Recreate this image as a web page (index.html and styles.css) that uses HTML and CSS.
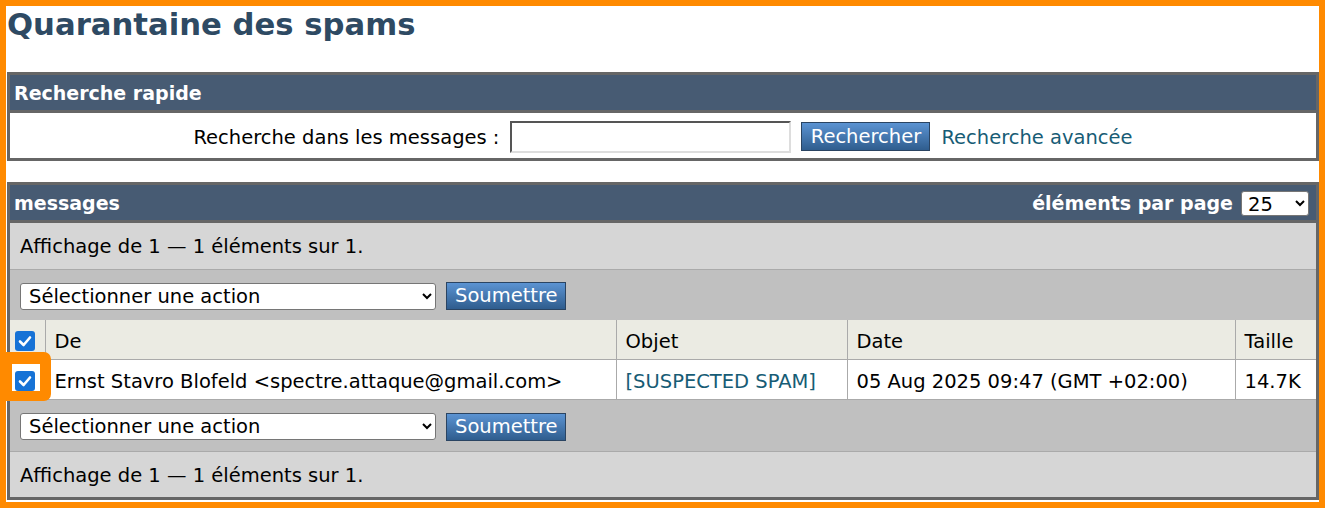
FILE: index.html
```html
<!DOCTYPE html>
<html lang="fr">
<head>
<meta charset="utf-8">
<title>Quarantaine des spams</title>
<link rel="stylesheet" href="styles.css">
</head>
<body>
<div class="page">
  <h1 class="title">Quarantaine des spams</h1>

  <section class="panel">
    <div class="panel-head">Recherche rapide</div>
    <div class="search-row">
      <label class="search-label" for="q">Recherche dans les messages :</label>
      <input class="search-input" id="q" type="text">
      <button class="btn btn-search" type="button">Rechercher</button>
      <a class="link adv-link" href="#">Recherche avancée</a>
    </div>
  </section>

  <section class="panel panel-messages">
    <div class="panel-head head-split">
      <span>messages</span>
      <span class="per-page">éléments par page
        <select class="sel-small"><option>25</option></select>
      </span>
    </div>
    <div class="info-row">Affichage de 1 — 1 éléments sur 1.</div>
    <div class="action-row">
      <select class="sel-action"><option>Sélectionner une action</option></select>
      <button class="btn btn-submit" type="button">Soumettre</button>
    </div>
    <table class="msg-table">
      <colgroup>
        <col class="c-cb"><col class="c-from"><col class="c-subj"><col class="c-date"><col class="c-size">
      </colgroup>
      <thead>
        <tr>
          <th class="cb-cell"><span class="cb"><svg viewBox="0 0 20 20" width="20" height="20"><path d="M5 10.5 L8.6 14 L15 6.5" fill="none" stroke="#fff" stroke-width="2.6" stroke-linecap="round" stroke-linejoin="round"/></svg></span></th>
          <th>De</th>
          <th>Objet</th>
          <th>Date</th>
          <th>Taille</th>
        </tr>
      </thead>
      <tbody>
        <tr>
          <td class="cb-cell"><span class="highlight"></span><span class="cb"><svg viewBox="0 0 20 20" width="20" height="20"><path d="M5 10.5 L8.6 14 L15 6.5" fill="none" stroke="#fff" stroke-width="2.6" stroke-linecap="round" stroke-linejoin="round"/></svg></span></td>
          <td>Ernst Stavro Blofeld &lt;spectre.attaque@gmail.com&gt;</td>
          <td><a class="link" href="#">[SUSPECTED SPAM]</a></td>
          <td>05 Aug 2025 09:47 (GMT +02:00)</td>
          <td>14.7K</td>
        </tr>
      </tbody>
    </table>
    <div class="action-row action-row-bottom">
      <select class="sel-action"><option>Sélectionner une action</option></select>
      <button class="btn btn-submit" type="button">Soumettre</button>
    </div>
    <div class="info-row info-row-bottom">Affichage de 1 — 1 éléments sur 1.</div>
  </section>
</div>
</body>
</html>
```

FILE: styles.css
```css
html, body {
  margin: 0;
  padding: 0;
  background: #fff;
}

body {
  font-family: "DejaVu Sans", Verdana, sans-serif;
  font-size: 19.5px;
  color: #000;
}

.page {
  box-sizing: border-box;
  width: 1325px;
  height: 508px;
  border: 6px solid #ff8a00;
  padding-left: 1px;
  overflow: hidden;
  background: #fff;
}

.title {
  margin: 0;
  height: 66px;
  font-size: 30.7px;
  line-height: 38px;
  font-weight: bold;
  color: #2e4a63;
}

.panel {
  border: 3px solid #666;
}

.panel-messages {
  margin-top: 21px;
}

.panel-head {
  box-sizing: border-box;
  height: 35px;
  line-height: 35px;
  padding: 2px 0 0 4px;
  background: #475b73;
  color: #fff;
  font-weight: bold;
  font-size: 19px;
  border-bottom: 3px solid #666;
  box-sizing: content-box;
  height: 33px;
  line-height: 33px;
}

.head-split {
  display: flex;
  justify-content: space-between;
  align-items: center;
  padding-top: 1px;
  height: 34px;
  line-height: 34px;
  padding-right: 7px;
}

.per-page {
  display: flex;
  align-items: center;
  gap: 8px;
}

.sel-small {
  width: 68px;
  height: 25px;
  font-family: "DejaVu Sans", Verdana, sans-serif;
  font-size: 19.5px;
  font-weight: normal;
  color: #000;
  background: #fff;
  border: 1px solid #767676;
  border-radius: 3px;
  padding: 0 2px;
}

.search-row {
  height: 43px;
  padding-top: 2px;
  display: flex;
  align-items: center;
  justify-content: center;
  background: #fff;
}

.search-label {
  margin-right: 11px;
  position: relative;
  top: 1px;
}

.search-input {
  box-sizing: border-box;
  width: 281px;
  height: 32px;
  margin: 0 10px 0 0;
  border: 2px solid;
  border-color: #555 #ddd #ddd #555;
  background: #fff;
  padding: 0 4px;
}

.btn {
  box-sizing: border-box;
  height: 29px;
  padding: 0 8px;
  border: 1px solid #2a4462;
  background: linear-gradient(#5b93d2, #2f5d8e);
  color: #fff;
  font-family: "DejaVu Sans", Verdana, sans-serif;
  font-size: 19.5px;
  line-height: 26px;
}

.btn-search {
  width: 129px;
  margin-right: 11px;
}

.adv-link {
  position: relative;
  top: 1px;
}

.btn-submit {
  width: 120px;
  height: 28px;
}

.link {
  color: #175c75;
  text-decoration: none;
}

.info-row {
  height: 44px;
  line-height: 44px;
  padding: 2px 0 0 10px;
  background: #d6d6d6;
  border-bottom: 1px solid #aaa;
}

.info-row-bottom {
  height: 43px;
  line-height: 43px;
  border-bottom: none;
}

.action-row {
  box-sizing: border-box;
  height: 50px;
  display: flex;
  align-items: center;
  gap: 10px;
  padding: 2px 0 0 10px;
  background: #c0c0c0;
}

.action-row-bottom {
  height: 52px;
  border-bottom: 1px solid #aaa;
}

.sel-action {
  width: 416px;
  height: 27px;
  font-family: "DejaVu Sans", Verdana, sans-serif;
  font-size: 19.5px;
  color: #000;
  background: #fff;
  border: 1px solid #767676;
  border-radius: 3px;
  padding: 0 4px;
}

.msg-table {
  width: 100%;
  border-collapse: collapse;
  table-layout: fixed;
}

.c-cb { width: 35px; }
.c-from { width: 571px; }
.c-subj { width: 231px; }
.c-date { width: 388px; }
.c-size { width: auto; }

.msg-table th,
.msg-table td {
  height: 36px;
  padding: 3px 0 0 9px;
  text-align: left;
  font-weight: normal;
  white-space: nowrap;
  overflow: hidden;
  border-left: 1px solid #aaa;
  border-bottom: 1px solid #aaa;
}

.msg-table th:first-child,
.msg-table td:first-child {
  border-left: none;
}

.msg-table thead th {
  background: #ebebe3;
}

.msg-table tbody td {
  background: #fff;
}

.msg-table .cb-cell {
  padding-left: 5px;
  overflow: visible;
  position: relative;
}

.cb {
  display: block;
  width: 20px;
  height: 20px;
  border-radius: 3px;
  background: #1672d6;
}

.cb svg {
  display: block;
}

.highlight {
  position: absolute;
  box-sizing: border-box;
  left: -10px;
  top: -8px;
  width: 51px;
  height: 49px;
  border-style: solid;
  border-color: #ff8a00;
  border-width: 12px 11px 10px 12px;
  border-radius: 7px;
  pointer-events: none;
}
```
